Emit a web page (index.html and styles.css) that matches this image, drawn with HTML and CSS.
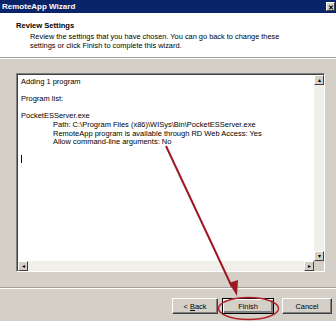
FILE: index.html
```html
<!DOCTYPE html>
<html lang="en">
<head>
    <meta charset="UTF-8">
    <title>RemoteApp Wizard</title>
    <link rel="stylesheet" href="styles.css">
</head>
<body>
    <div class="window">
        <div class="titlebar">
            <span class="title">RemoteApp Wizard</span>
            <span class="close">&#x2715;</span>
        </div>

        <div class="header">
            <h1>Review Settings</h1>
            <p>Review the settings that you have chosen. You can go back to change these<br>settings or click Finish to complete this wizard.</p>
        </div>

        <div class="body">
            <div class="textbox">
                <div class="content">
                    <div class="line">Adding 1 program</div>
                    <div class="line"></div>
                    <div class="line">Program list:</div>
                    <div class="line"></div>
                    <div class="line">PocketESServer.exe</div>
                    <div class="line indent">Path: C:\Program Files (x86)\WISys\Bin\PocketESServer.exe</div>
                    <div class="line indent">RemoteApp program is available through RD Web Access: Yes</div>
                    <div class="line indent">Allow command-line arguments: No</div>
                    <div class="line"></div>
                    <div class="line"><span class="caret"></span></div>
                </div>
                <div class="vscroll">
                    <span class="arrow">&#9652;</span>
                    <span class="track"></span>
                    <span class="arrow">&#9662;</span>
                </div>
                <div class="hscroll">
                    <span class="arrow">&#9666;</span>
                    <span class="track"></span>
                    <span class="arrow">&#9656;</span>
                </div>
                <div class="corner"></div>
            </div>
        </div>

        <div class="footer">
            <button class="btn back">&lt; <u>B</u>ack</button>
            <button class="btn finish">Finish</button>
            <button class="btn cancel">Cancel</button>
        </div>

        <svg class="markup" width="336" height="321" viewBox="0 0 336 321">
            <line x1="166" y1="146" x2="232" y2="287" stroke="#9e1822" stroke-width="2"/>
            <polygon points="229,283 238,280 237,296" fill="#9e1822"/>
            <ellipse cx="248.5" cy="308.5" rx="30" ry="11" fill="none" stroke="#b3222c" stroke-width="1.5"/>
        </svg>
    </div>
</body>
</html>
```

FILE: styles.css
```css
body {
    margin: 0;
    font-family: 'Liberation Sans', Arial, sans-serif;
    font-size: 7.4px;
    color: #000;
}
.window {
    position: relative;
    width: 336px;
    height: 321px;
    background-color: #d4d0c8;
    overflow: hidden;
    display: flex;
    flex-direction: column;
}
.titlebar {
    height: 13px;
    background-color: #0a246a;
    display: flex;
    align-items: center;
    justify-content: space-between;
    padding: 0 1px 0 2px;
}
.title {
    color: #fff;
    font-weight: bold;
    font-size: 8px;
}
.close {
    width: 9px;
    height: 9px;
    background-color: #d4d0c8;
    border: 1px solid;
    border-color: #fff #404040 #404040 #fff;
    font-size: 7px;
    font-weight: bold;
    line-height: 9px;
    text-align: center;
    box-sizing: border-box;
}
.header {
    height: 45px;
    background-color: #fff;
    border-bottom: 1px solid #a0a0a0;
    box-shadow: 0 1px 0 #fff;
    box-sizing: border-box;
    padding-top: 8px;
}
.header h1 {
    margin: 0 0 0 16px;
    font-size: 7.6px;
    font-weight: bold;
    line-height: 9px;
}
.header p {
    margin: 2px 0 0 30px;
    line-height: 9px;
}
.body {
    padding: 15px 11px 0 16px;
}
.textbox {
    height: 199px;
    background-color: #fff;
    border: 1px solid;
    border-color: #808080 #fff #fff #808080;
    box-shadow: inset 1px 1px 0 #404040;
    box-sizing: border-box;
    display: grid;
    grid-template-columns: 1fr 10px;
    grid-template-rows: 1fr 10px;
    padding: 1px 0 0 1px;
}
.content {
    padding: 3px 0 0 3px;
    font-size: 7.5px;
    line-height: 8.6px;
    white-space: nowrap;
    overflow: hidden;
}
.line {
    height: 8.6px;
}
.indent {
    padding-left: 32px;
}
.caret {
    display: inline-block;
    width: 1px;
    height: 8px;
    background-color: #000;
    vertical-align: middle;
}
.vscroll, .hscroll {
    display: flex;
    background-color: #f0efea;
}
.vscroll {
    flex-direction: column;
}
.track {
    flex: 1;
}
.arrow {
    width: 10px;
    height: 10px;
    background-color: #d4d0c8;
    border: 1px solid;
    border-color: #fff #404040 #404040 #fff;
    box-sizing: border-box;
    font-size: 6px;
    line-height: 8px;
    text-align: center;
    color: #000;
}
.corner {
    background-color: #d4d0c8;
}
.footer {
    margin-top: 15px;
    border-top: 1px solid #a0a0a0;
    box-shadow: inset 0 1px 0 #fff;
    padding: 10px 4px 0 0;
    display: flex;
    justify-content: flex-end;
}
.btn {
    height: 16px;
    padding: 0;
    margin: 0;
    font-family: 'Liberation Sans', Arial, sans-serif;
    font-size: 7.4px;
    color: #000;
    background-color: #d4d0c8;
    border: 1px solid;
    border-color: #fff #404040 #404040 #fff;
    box-shadow: inset -1px -1px 0 #808080;
    box-sizing: border-box;
}
.back {
    width: 46px;
}
.finish {
    width: 52px;
    margin-left: 4px;
    border-color: #000;
    box-shadow: inset 1px 1px 0 #fff, inset -2px -2px 0 #808080;
}
.cancel {
    width: 50px;
    margin-left: 8px;
}
.markup {
    position: absolute;
    left: 0;
    top: 0;
    pointer-events: none;
}
```
